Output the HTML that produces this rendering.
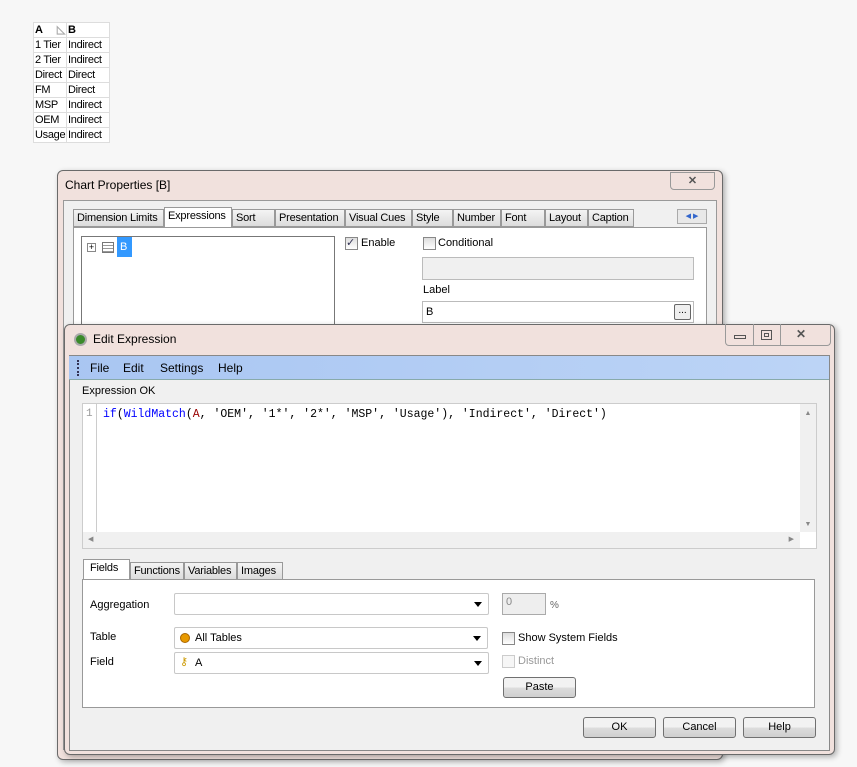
<!DOCTYPE html>
<html><head><style>
*{box-sizing:border-box;margin:0;padding:0}
body{width:857px;height:767px;background:#f7f7f7;position:relative;overflow:hidden;font-family:"Liberation Sans",sans-serif;font-size:11px;color:#000}
.a{position:absolute;white-space:nowrap}
table{border-collapse:collapse;position:absolute;left:33px;top:22px;font-size:11px;background:#fff;table-layout:fixed;width:76px;letter-spacing:-0.3px}
td{border:1px solid #ddd;height:15px;padding:0 1px;line-height:13px;white-space:nowrap;overflow:hidden}
.win{background:#f1e1dd;border:1px solid #6a6a6a;border-radius:6px;box-shadow:2px 2px 6px rgba(0,0,0,.3)}
.box{background:#fff;border:1px solid #a0a0a0}
.tab{position:absolute;height:18px;border:1px solid #999;background:linear-gradient(#f4f4f4,#dcdcdc);font-size:11px;line-height:16px;padding-left:3px;white-space:nowrap;overflow:hidden;letter-spacing:-0.2px}
.cb{position:absolute;width:13px;height:13px;border:1px solid #888;background:linear-gradient(#ddd,#fff)}
.btn{position:absolute;height:21px;border:1px solid #707070;border-radius:3px;background:linear-gradient(#f2f2f2 50%,#dddddd 50%,#cfcfcf);text-align:center;line-height:19px;font-size:11px}
.combo{position:absolute;height:22px;background:#fff;border:1px solid #c8c8c8;border-radius:2px;line-height:20px;padding-left:6px}
.combo:after{content:"";position:absolute;right:6px;top:8px;border:4px solid transparent;border-top:5px solid #000;}
</style></head><body>
<table>
<colgroup><col style="width:33px"><col style="width:43px"></colgroup>
<tr><td style="font-weight:bold">A <span style="color:#aaa;float:right">◺</span></td><td style="font-weight:bold">B</td></tr>
<tr><td>1 Tier</td><td>Indirect</td></tr><tr><td>2 Tier</td><td>Indirect</td></tr>
<tr><td>Direct</td><td>Direct</td></tr><tr><td>FM</td><td>Direct</td></tr>
<tr><td>MSP</td><td>Indirect</td></tr><tr><td>OEM</td><td>Indirect</td></tr>
<tr><td>Usage</td><td>Indirect</td></tr>
</table>

<!-- Chart Properties -->
<div class="a win" style="left:57px;top:170px;width:666px;height:590px"></div>
<div class="a" style="left:65px;top:178px;font-size:12px">Chart Properties [B]</div>
<div class="a" style="left:670px;top:172px;width:45px;height:18px;border:1px solid #999;border-radius:0 0 4px 4px;text-align:center;font-weight:bold;color:#555;line-height:16px">✕</div>
<div class="a" style="left:63px;top:200px;width:654px;height:550px;background:#f0f0f0;border:1px solid #999"></div>
<div class="tab" style="left:73px;top:209px;width:91px">Dimension Limits</div>
<div class="tab" style="left:164px;top:207px;width:68px;height:21px;background:#fff;border-bottom:none">Expressions</div>
<div class="tab" style="left:232px;top:209px;width:43px">Sort</div>
<div class="tab" style="left:275px;top:209px;width:70px">Presentation</div>
<div class="tab" style="left:345px;top:209px;width:67px">Visual Cues</div>
<div class="tab" style="left:412px;top:209px;width:41px">Style</div>
<div class="tab" style="left:453px;top:209px;width:48px">Number</div>
<div class="tab" style="left:501px;top:209px;width:44px">Font</div>
<div class="tab" style="left:545px;top:209px;width:43px">Layout</div>
<div class="tab" style="left:588px;top:209px;width:46px">Caption</div>
<div class="a" style="left:677px;top:209px;width:30px;height:15px;border:1px solid #aaa;background:#e8e8e8;font-size:7px;color:#36c;line-height:13px;text-align:center">◀ ▶</div>
<div class="a" style="left:73px;top:227px;width:634px;height:180px;background:#fff;border:1px solid #999"></div>
<div class="a box" style="left:81px;top:236px;width:254px;height:100px;border-color:#777"></div>
<div class="a" style="left:87px;top:243px;width:9px;height:9px;border:1px solid #888;font-size:9px;line-height:7px;text-align:center">+</div>
<div class="a" style="left:102px;top:242px;width:12px;height:11px;border:1px solid #777;background:repeating-linear-gradient(#fff 0 2px,#999 2px 3px)"></div>
<div class="a" style="left:117px;top:237px;width:15px;height:20px;background:#3399ff;color:#fff;padding-left:3px;line-height:20px">B</div>
<div class="cb" style="left:345px;top:237px;font-size:11px;line-height:11px;color:#335">✓</div>
<div class="a" style="left:361px;top:237px">Enable</div>
<div class="cb" style="left:423px;top:237px"></div>
<div class="a" style="left:438px;top:237px">Conditional</div>
<div class="a" style="left:422px;top:257px;width:272px;height:23px;background:#f0f0f0;border:1px solid #bbb"></div>
<div class="a" style="left:423px;top:284px">Label</div>
<div class="a" style="left:422px;top:301px;width:272px;height:22px;background:#fff;border:1px solid #bbb;padding-left:3px;line-height:20px">B</div>
<div class="a" style="left:674px;top:304px;width:17px;height:16px;border:1px solid #666;border-radius:2px;background:#eee;font-size:10px;text-align:center;line-height:12px">...</div>

<!-- Edit Expression -->
<div class="a win" style="left:64px;top:324px;width:771px;height:431px"></div>
<div class="a" style="left:74px;top:333px;width:13px;height:13px;border-radius:50%;background:#3a8a2a;border:2px solid #aaa"></div>
<div class="a" style="left:93px;top:332px;font-size:12px">Edit Expression</div>
<div class="a" style="left:725px;top:324px;width:106px;height:22px;border:1px solid #999;border-top:none;border-radius:0 0 4px 4px"></div>
<div class="a" style="left:753px;top:324px;width:1px;height:22px;background:#999"></div>
<div class="a" style="left:780px;top:324px;width:1px;height:22px;background:#999"></div>
<div class="a" style="left:734px;top:335px;width:12px;height:4px;border:1px solid #555"></div>
<div class="a" style="left:761px;top:330px;width:11px;height:10px;border:1px solid #555"></div>
<div class="a" style="left:764px;top:333px;width:5px;height:4px;border:1px solid #555"></div>
<div class="a" style="left:796px;top:327px;font-weight:bold;color:#555;font-size:12px">✕</div>
<div class="a" style="left:69px;top:355px;width:761px;height:396px;background:#f0f0f0;border:1px solid #888"></div>
<div class="a" style="left:69px;top:356px;width:760px;height:24px;background:linear-gradient(90deg,#a9c6f2,#bcd4f6);border-bottom:1px solid #8aa"></div>
<div class="a" style="left:77px;top:360px;width:2px;height:16px;border-left:2px dotted #335"></div>
<div class="a" style="left:90px;top:361px;font-size:12px">File</div>
<div class="a" style="left:123px;top:361px;font-size:12px">Edit</div>
<div class="a" style="left:160px;top:361px;font-size:12px">Settings</div>
<div class="a" style="left:218px;top:361px;font-size:12px">Help</div>
<div class="a" style="left:82px;top:385px">Expression OK</div>
<div class="a box" style="left:82px;top:403px;width:735px;height:146px;border-color:#ccc"></div>
<div class="a" style="left:83px;top:404px;width:14px;height:128px;background:#fff;border-right:1px solid #ccc;color:#999;font-family:'Liberation Mono',monospace;font-size:11px;padding:4px 0 0 3px">1</div>
<div class="a" style="left:103px;top:408px;font-family:'Liberation Mono',monospace;font-size:11.5px;white-space:pre"><span style="color:#00f">if</span>(<span style="color:#00f">WildMatch</span>(<span style="color:#900">A</span>, 'OEM', '1*', '2*', 'MSP', 'Usage'), 'Indirect', 'Direct')</div>
<div class="a" style="left:800px;top:404px;width:16px;height:128px;background:#f0f0f0;font-size:7px;color:#888;text-align:center;padding-top:6px">▲<div style="margin-top:104px">▼</div></div>
<div class="a" style="left:83px;top:532px;width:717px;height:16px;background:#f0f0f0;font-size:7px;color:#888;line-height:16px;padding-left:5px">◀<span style="float:right;margin-right:6px">▶</span></div>
<div class="tab" style="left:83px;top:559px;width:47px;height:21px;background:#fff;border-bottom:none;padding-left:6px">Fields</div>
<div class="tab" style="left:130px;top:562px;width:54px">Functions</div>
<div class="tab" style="left:184px;top:562px;width:53px">Variables</div>
<div class="tab" style="left:237px;top:562px;width:46px">Images</div>
<div class="a" style="left:82px;top:579px;width:733px;height:129px;background:#fff;border:1px solid #999"></div>
<div class="a" style="left:90px;top:599px">Aggregation</div>
<div class="combo" style="left:174px;top:593px;width:315px"></div>
<div class="a" style="left:502px;top:593px;width:44px;height:22px;background:#eee;border:1px solid #aaa;color:#888;padding:2px 3px;font-size:11px">0</div>
<div class="a" style="left:550px;top:600px;font-size:10px;color:#666">%</div>
<div class="a" style="left:90px;top:631px">Table</div>
<div class="combo" style="left:174px;top:627px;width:314px;padding-left:20px">All Tables</div>
<div class="a" style="left:180px;top:633px;width:10px;height:10px;border-radius:50%;background:#e89a00;border:1px solid #a60"></div>
<div class="cb" style="left:502px;top:632px"></div>
<div class="a" style="left:518px;top:632px">Show System Fields</div>
<div class="a" style="left:90px;top:656px">Field</div>
<div class="combo" style="left:174px;top:652px;width:315px;padding-left:20px">A</div>
<div class="a" style="left:180px;top:655px;color:#c90;font-size:11px">⚷</div>
<div class="cb" style="left:502px;top:655px;border-color:#ccc;background:#f6f6f6"></div>
<div class="a" style="left:518px;top:655px;color:#999">Distinct</div>
<div class="btn" style="left:503px;top:677px;width:73px">Paste</div>
<div class="btn" style="left:583px;top:717px;width:73px">OK</div>
<div class="btn" style="left:663px;top:717px;width:73px">Cancel</div>
<div class="btn" style="left:743px;top:717px;width:73px">Help</div>
</body></html>
